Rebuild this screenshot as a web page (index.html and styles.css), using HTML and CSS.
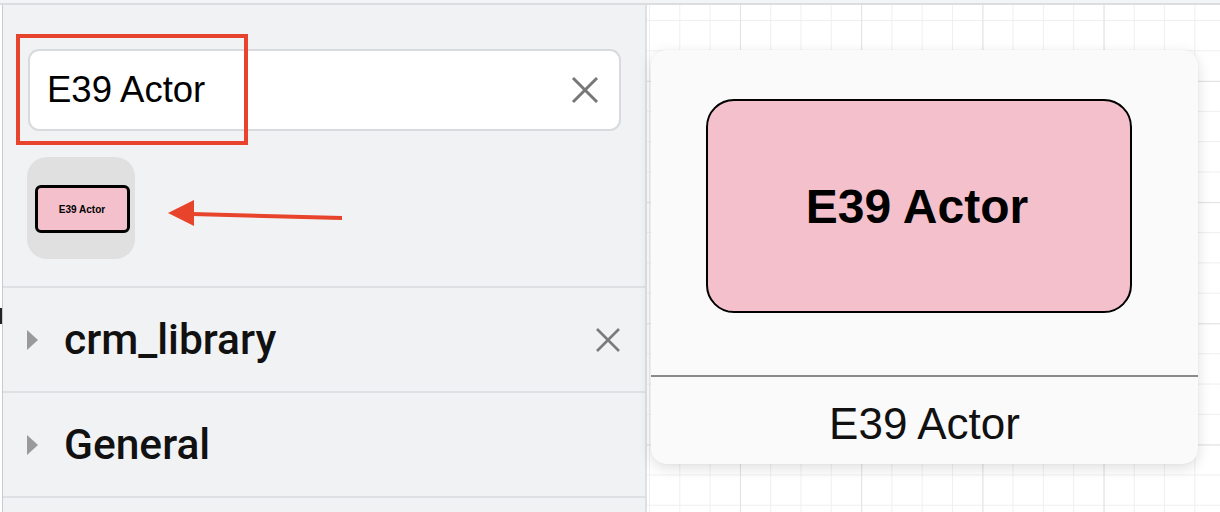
FILE: index.html
```html
<!DOCTYPE html>
<html>
<head>
<meta charset="utf-8">
<link rel="stylesheet" href="styles.css">
</head>
<body>
<div class="top-strip"></div>
<div class="main">
  <aside class="sidebar">
    <div class="search-area">
      <div class="search-box">
        <span class="search-text">E39 Actor</span>
        <svg class="clear-icon" width="28" height="28" viewBox="0 0 28 28"><path d="M2 2 L26 26 M26 2 L2 26" stroke="#777" stroke-width="3" fill="none"/></svg>
      </div>
      <div class="results">
        <div class="tile">
          <div class="mini-shape">E39 Actor</div>
        </div>
      </div>
      <div class="highlight-box"></div>
      <svg class="arrow" width="190" height="40" viewBox="0 0 190 40"><path d="M24 15 L174 19" stroke="#e8442b" stroke-width="4" fill="none"/><path d="M0 14 L26 1 L26 27 Z" fill="#e8442b"/></svg>
    </div>
    <div class="lib-row">
      <span class="caret"></span>
      <span class="lib-name">crm_library</span>
      <svg class="row-close" width="24" height="24" viewBox="0 0 24 24"><path d="M1 1 L23 23 M23 1 L1 23" stroke="#7b7b7b" stroke-width="2.6" fill="none"/></svg>
    </div>
    <div class="lib-row">
      <span class="caret"></span>
      <span class="lib-name">General</span>
    </div>
    <div class="lib-row short"></div>
    <span class="edge-mark"></span>
  </aside>
  <section class="canvas">
    <div class="preview-card">
      <div class="preview-stage">
        <div class="big-shape">E39 Actor</div>
      </div>
      <div class="preview-label">E39 Actor</div>
    </div>
  </section>
</div>
</body>
</html>
```
FILE: styles.css
```css
* { box-sizing: border-box; }
html, body { margin: 0; padding: 0; }
body {
  width: 1220px;
  height: 512px;
  overflow: hidden;
  background: #ffffff;
  font-family: "Liberation Sans", Arial, sans-serif;
  color: #000;
}
.top-strip {
  height: 5px;
  background: #f3f4f6;
  border-bottom: 2px solid #dcdde0;
}
.main {
  display: flex;
  height: 507px;
}
.sidebar {
  position: relative;
  width: 645px;
  margin-left: 2px;
  border-left: 1px solid #c9cacd;
  border-right: 2px solid #dfe0e3;
  background: #f1f2f4;
  display: flex;
  flex-direction: column;
  flex: none;
}
.search-area {
  position: relative;
  padding: 44px 24px 27px 25px;
  border-bottom: 2px solid #dfe0e3;
}
.search-box {
  height: 82px;
  background: #fff;
  border: 2px solid #d9dadd;
  border-radius: 11px;
  display: flex;
  align-items: center;
  padding: 0 20px 0 17px;
}
.search-text {
  flex: 1;
  font-size: 36.5px;
  color: #000;
}
.clear-icon { display: block; }
.results {
  padding-top: 26px;
  display: flex;
}
.tile {
  width: 108px;
  height: 102px;
  background: #e0e0e0;
  border-radius: 20px;
  margin-left: -1px;
  display: flex;
  align-items: center;
  justify-content: center;
  padding-left: 2px;
}
.mini-shape {
  width: 95px;
  height: 48px;
  background: #f4c0cb;
  border: 3px solid #000;
  border-radius: 6px;
  display: flex;
  align-items: center;
  justify-content: center;
  font-size: 10px;
  font-weight: bold;
  margin-top: 2px;
}
.highlight-box {
  position: absolute;
  left: 13px;
  top: 29px;
  width: 232px;
  height: 111px;
  border: 4px solid #e8432d;
}
.arrow {
  position: absolute;
  left: 165px;
  top: 194px;
}
.lib-row {
  height: 105px;
  border-bottom: 2px solid #dfe0e3;
  display: flex;
  align-items: center;
  padding: 0 24px 0 24px;
  flex: none;
}
.lib-row.short { height: 20px; border-bottom: none; }
.caret {
  width: 0;
  height: 0;
  border-top: 10px solid transparent;
  border-bottom: 10px solid transparent;
  border-left: 11px solid #9a9a9a;
  margin-right: 26px;
}
.lib-name {
  flex: 1;
  font-family: Roboto, "Liberation Sans", sans-serif;
  font-weight: 500;
  font-size: 42.5px;
  color: #111;
}
.row-close { display: block; margin-right: 1px; }
.edge-mark {
  position: absolute;
  left: -3px;
  top: 303px;
  width: 2px;
  height: 16px;
  background: #222;
}
.canvas {
  position: relative;
  flex: 1;
  background-color: #fff;
  background-image:
    linear-gradient(to right, #e3e3e3 1px, transparent 1px),
    linear-gradient(to bottom, #e3e3e3 1px, transparent 1px),
    linear-gradient(to right, #efefef 1px, transparent 1px),
    linear-gradient(to bottom, #efefef 1px, transparent 1px);
  background-size: 121.2px 121.2px, 121.2px 121.2px, 30.3px 30.3px, 30.3px 30.3px;
  background-position: 93px 0, 0 76px, 2px 0, 0 15px;
}
.preview-card {
  position: absolute;
  left: 4px;
  top: 45px;
  width: 547px;
  height: 414px;
  background: #fafafa;
  border-radius: 15px;
  box-shadow: 0 4px 14px rgba(0,0,0,0.13), 0 0 2px rgba(0,0,0,0.06);
  display: flex;
  flex-direction: column;
  overflow: hidden;
}
.preview-stage {
  height: 327px;
  border-bottom: 2px solid #8a8a8a;
  padding: 49px 0 0 55px;
}
.big-shape {
  width: 426px;
  height: 214px;
  background: #f4c0cb;
  border: 2px solid #000;
  border-radius: 28px;
  display: flex;
  align-items: center;
  justify-content: center;
  font-size: 48px;
  font-weight: bold;
  padding-right: 4px;
}
.preview-label {
  flex: 1;
  display: flex;
  align-items: center;
  justify-content: center;
  font-size: 44px;
  color: #111;
  padding-top: 6px;
}
```
